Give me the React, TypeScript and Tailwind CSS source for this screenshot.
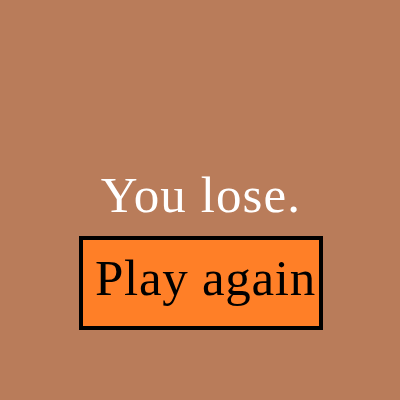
export default function App() {
  return (
    <div className="w-[400px] h-[400px] bg-[#b97c5a] flex flex-col items-center" style={{ fontFamily: '"Liberation Serif", serif' }}>
      <div className="mt-[170px] ml-[2px] text-white text-[51px] leading-[51px] tracking-[1.1px]">You lose.</div>
      <button className="mt-[15px] ml-[2px] w-[244px] h-[94px] border-4 border-black bg-[#ff7f27] text-black text-[51px] leading-[51px] tracking-[0.7px] flex items-start justify-start pl-[12px] pt-[13px]">
        Play again
      </button>
    </div>
  );
}
